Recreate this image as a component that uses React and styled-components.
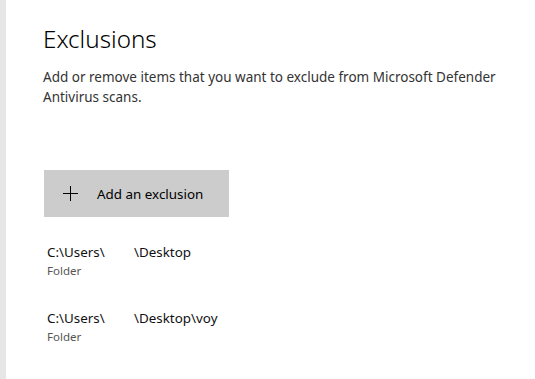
import React from "react";
import styled, { createGlobalStyle } from "styled-components";

const Global = createGlobalStyle`
  html, body { margin: 0; padding: 0; background: #fff; }
  body { font-family: "Segoe UI", "Noto Sans", sans-serif; }
`;

const Page = styled.div`
  display: flex;
  width: 535px;
  height: 379px;
  overflow: hidden;
  background: #fff;
`;

const Rail = styled.div`
  width: 6px;
  flex: none;
  background: #e6e6e6;
`;

const Content = styled.main`
  display: flex;
  flex-direction: column;
  padding: 23px 0 0 37px;
`;

const Title = styled.h1`
  margin: 0;
  font-size: 24.2px;
  font-weight: 300;
  line-height: 32px;
  color: #000;
`;

const Desc = styled.p`
  margin: 12px 0 0;
  width: 470px;
  font-size: 13.5px;
  line-height: 20px;
  color: #333;
`;

const AddButton = styled.button`
  display: flex;
  align-items: center;
  gap: 19px;
  margin: 63px 0 0 1px;
  width: 185px;
  height: 47px;
  padding: 0 0 0 19px;
  border: none;
  background: #cccccc;
  color: #000;
  font-family: inherit;
  font-size: 13.4px;
  cursor: pointer;
`;

const List = styled.ul`
  list-style: none;
  margin: 25px 0 0 4px;
  padding: 0;
  display: flex;
  flex-direction: column;
  gap: 29px;
`;

const Item = styled.li`
  display: flex;
  flex-direction: column;
`;

const Path = styled.div`
  display: flex;
  font-size: 13.4px;
  line-height: 21px;
  color: #111;
`;

const Seg = styled.span`
  width: ${(p) => p.$w || "auto"};
`;

const Kind = styled.div`
  font-size: 11.5px;
  line-height: 16px;
  color: #555;
`;

const Plus = () => (
  <svg width="15" height="15" viewBox="0 0 15 15">
    <path d="M7.5 0v15M0 7.5h15" stroke="#000" strokeWidth="1" />
  </svg>
);

export default function App() {
  const items = [
    ["C:\\Users\\", "\\Desktop"],
    ["C:\\Users\\", "\\Desktop\\voy"],
  ];
  return (
    <Page>
      <Global />
      <Rail />
      <Content>
        <Title>Exclusions</Title>
        <Desc>
          Add or remove items that you want to exclude from Microsoft Defender
          Antivirus scans.
        </Desc>
        <AddButton>
          <Plus />
          <span>Add an exclusion</span>
        </AddButton>
        <List>
          {items.map((it, i) => (
            <Item key={i}>
              <Path>
                <Seg $w="87px">{it[0]}</Seg>
                <Seg>{it[1]}</Seg>
              </Path>
              <Kind>Folder</Kind>
            </Item>
          ))}
        </List>
      </Content>
    </Page>
  );
}
